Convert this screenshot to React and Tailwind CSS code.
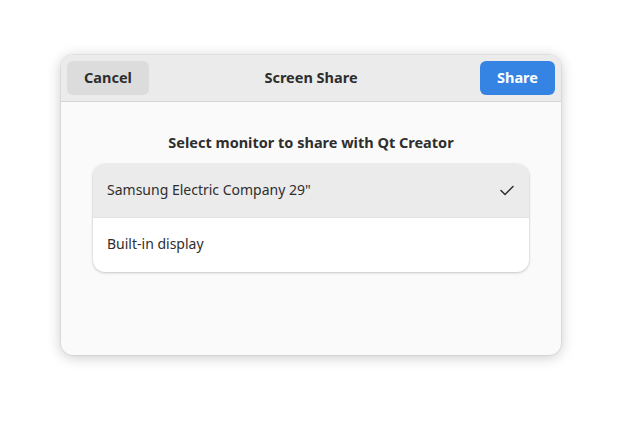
export default function App() {
  return (
    <div className="w-[622px] h-[422px] bg-white flex items-start justify-start" style={{ fontFamily: '"Noto Sans", "Open Sans", sans-serif' }}>
      <div className="ml-[61px] mt-[55px] w-[500px] h-[300px] rounded-[12px] bg-[#fafafa] shadow-[0_2px_14px_rgba(0,0,0,0.22),0_0_0_1px_rgba(0,0,0,0.05)] flex flex-col overflow-hidden">
        <div className="h-[47px] bg-[#ebebeb] border-b border-[#d6d6d6] grid grid-cols-[1fr_auto_1fr] items-center px-[6px] pb-[1px] shrink-0">
          <div className="flex justify-start">
            <button className="w-[82px] h-[34px] rounded-[6px] bg-[#dcdcdc] text-[#2e2e2e] text-[14.5px] font-bold leading-[18px] pb-[1px]">Cancel</button>
          </div>
          <div className="text-[14.5px] font-bold text-[#2e2e2e] leading-[18px] pb-[1px]">Screen Share</div>
          <div className="flex justify-end">
            <button className="w-[75px] h-[34px] rounded-[6px] bg-[#3584e4] text-white text-[14.5px] font-bold leading-[18px] pb-[1px]">Share</button>
          </div>
        </div>
        <div className="flex flex-col items-center pt-[31px]">
          <div className="text-[14.5px] font-bold text-[#2e2e2e] leading-[18px]">Select monitor to share with Qt Creator</div>
          <div className="mt-[13px] w-[436px] rounded-[12px] bg-white shadow-[0_1px_3px_rgba(0,0,0,0.18),0_0_0_1px_rgba(0,0,0,0.03)] overflow-hidden">
            <div className="h-[54px] bg-[#ebebeb] border-b border-[#e2e2e2] flex items-center justify-between pl-[14px] pr-[14px]">
              <span className="text-[14px] text-[#2e2e2e] leading-[18px] pb-[2px]">Samsung Electric Company 29"</span>
              <svg width="16" height="16" viewBox="0 0 16 16" fill="none">
                <path d="M2 7.5 L6 11.5 L14 3.5" stroke="#2e2e2e" strokeWidth="1.5" strokeLinecap="round" strokeLinejoin="round" />
              </svg>
            </div>
            <div className="h-[54px] flex items-center pl-[14px]">
              <span className="text-[14px] text-[#2e2e2e] leading-[18px] pb-[2px]">Built-in display</span>
            </div>
          </div>
        </div>
      </div>
    </div>
  );
}
